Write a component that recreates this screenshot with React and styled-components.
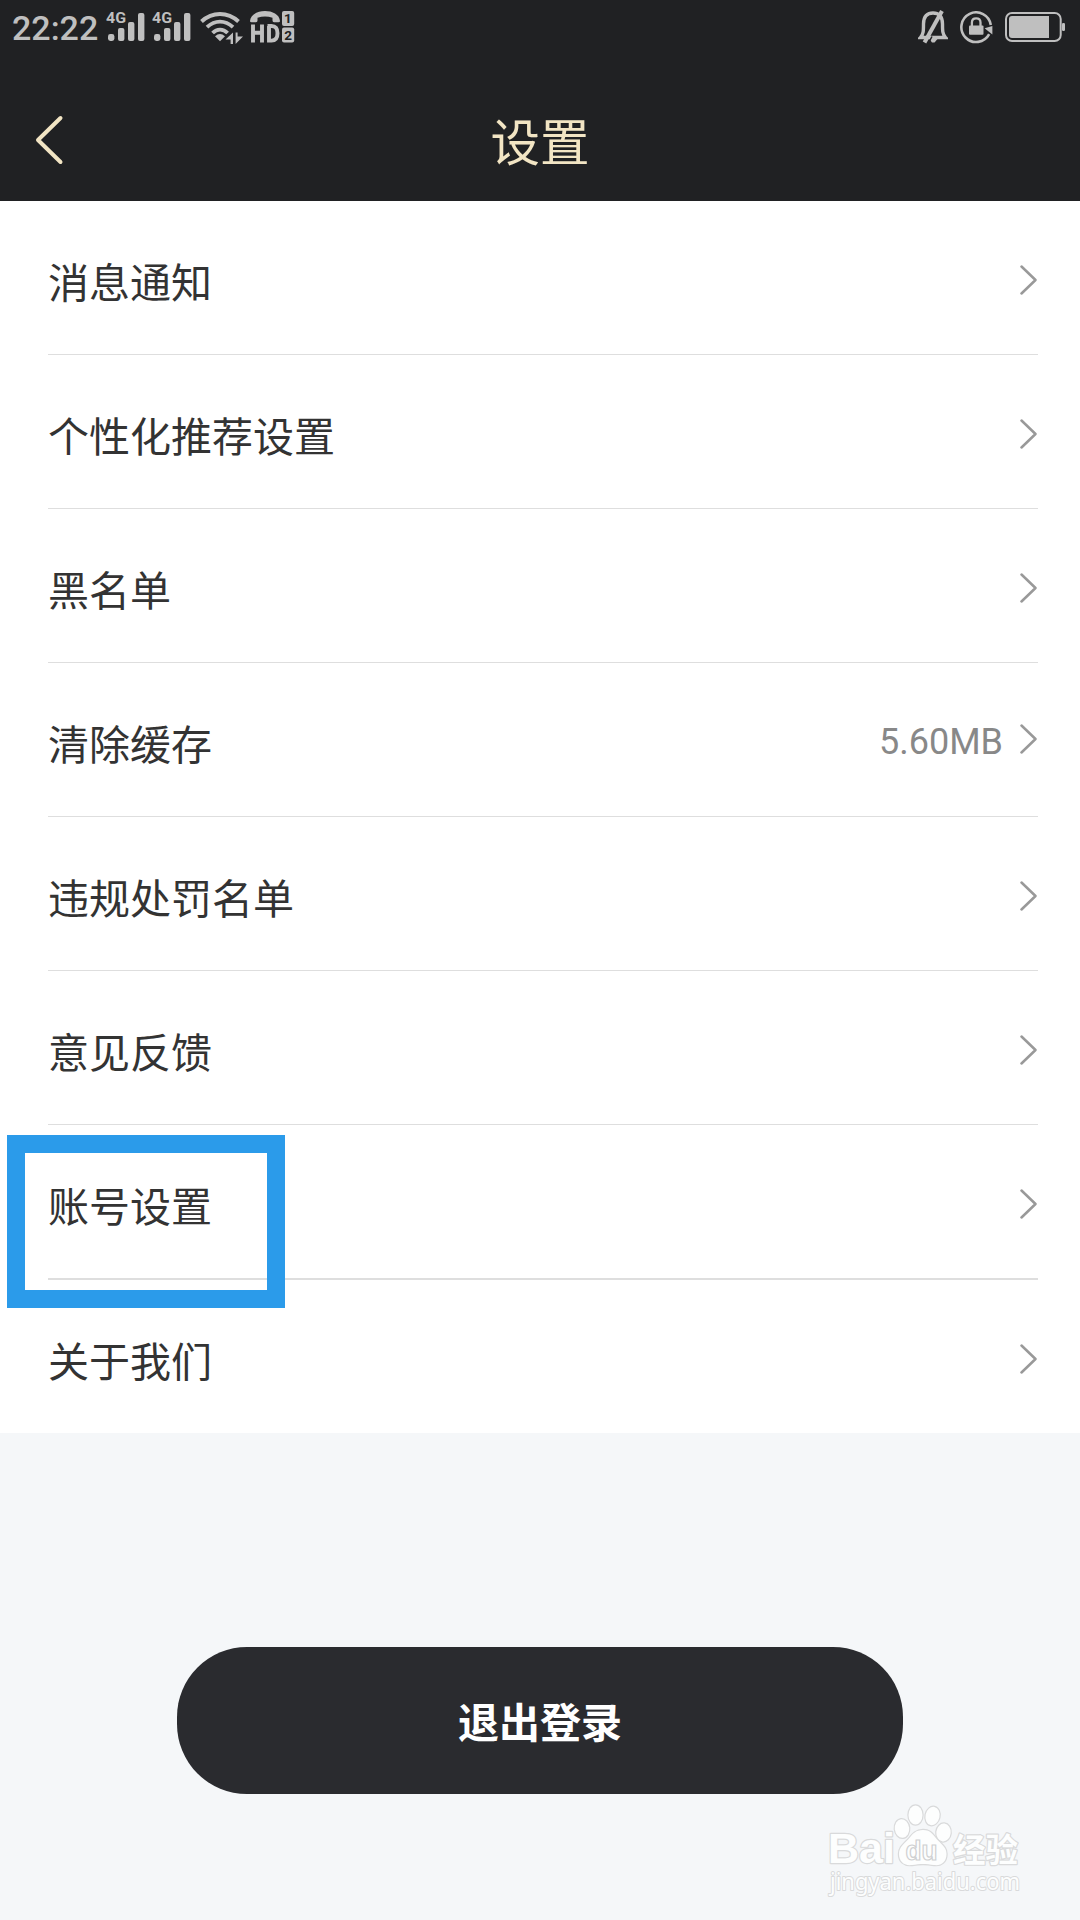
import React from 'react';
import styled, { createGlobalStyle } from 'styled-components';

const rows = [
    { label: '消息通知' },
    { label: '个性化推荐设置' },
    { label: '黑名单' },
    { label: '清除缓存', value: '5.60MB' },
    { label: '违规处罚名单' },
    { label: '意见反馈' },
    { label: '账号设置', marked: true },
    { label: '关于我们' },
];

const SignalIcon = () => (
    <svg width="40" height="32" viewBox="0 0 40 32" fill="#bfbfbf">
        <text x="0" y="13.4" fontSize="14" fontWeight="700" fontFamily="Roboto, sans-serif" textLength="20" lengthAdjust="spacingAndGlyphs">4G</text>
        <rect x="2" y="24" width="6.4" height="7" rx="2.4" />
        <rect x="12" y="18" width="6.4" height="13" rx="2" />
        <rect x="22" y="12" width="6.4" height="19" rx="2" />
        <rect x="32" y="3" width="6.4" height="28" rx="2" />
    </svg>
);

const WifiIcon = () => (
    <svg width="44" height="34" viewBox="0 0 44 34" fill="none" stroke="#bfbfbf">
        <path d="M1.500 11.500C12.500 1.500 27.500 1.500 38.500 11.500" strokeWidth="4" />
        <path d="M7 17.200C15 9.800 25 9.800 33 17.200" strokeWidth="3.800" />
        <path d="M12.600 23C17 18.400 23 18.400 27.600 23" strokeWidth="3.800" />
        <path d="M15 26.200Q20 21.800 25 26.200L20 31.200Z" fill="#bfbfbf" stroke="none" />
        <path d="M33 22.500V34H30.600V29.500H25.500ZM35.600 34V22.500H37.600V26.500H43Z" fill="#bfbfbf" stroke="none" />
    </svg>
);

const HdIcon = () => (
    <svg width="45" height="33" viewBox="0 0 45 33" fill="#bfbfbf">
        <path d="M0 10C1 -3.300 29 -3.300 30 10Q30 11.300 28.500 11.300H24Q22.500 11.300 22.500 9.500V6.800Q15 4 7.500 6.800V9.500Q7.500 11.300 6 11.300H1.500Q0 11.300 0 10Z" />
        <path d="M3 13.500V31.500M12 13.500V31.500M3 21.800H12M19 15V29.600H21.500Q27.500 29.600 27.500 22.300T21.500 15H17.500" fill="none" stroke="#bfbfbf" strokeWidth="3.900" />
        <rect x="32" y="0" width="12.200" height="15" rx="2" />
        <rect x="32" y="16.500" width="12.200" height="15" rx="2" />
        <g fill="#202123" fontSize="13.500" fontWeight="700" fontFamily="Roboto, sans-serif" textAnchor="middle">
            <text x="37.800" y="12.300">1</text>
            <text x="38" y="28.800">2</text>
        </g>
    </svg>
);

const BellOffIcon = () => (
    <svg width="30" height="34" viewBox="0 0 30 34" fill="none" stroke="#bfbfbf" strokeWidth="3.400">
        <path d="M2.500 27.500H27.500C24.500 24 24.500 21 24.500 14C24.500 6 20.500 3 15 3S5.500 6 5.500 14C5.500 21 5.500 24 2.500 27.500Z" />
        <path d="M11.500 29H19.500L16.500 32.500H14Z" fill="#bfbfbf" stroke="none" />
        <path d="M6.500 32.500L24 1" strokeWidth="4" />
        <path d="M10.500 33L14 26.500" stroke="#202123" strokeWidth="1.500" />
    </svg>
);

const LockIcon = () => (
    <svg width="33" height="33" viewBox="0 0 33 33" fill="none" stroke="#bfbfbf">
        <path d="M29.200 23.200A14.800 14.800 0 1 1 30.800 14" strokeWidth="2.600" />
        <path d="M24.600 17.200L32.400 15V23.500Z" fill="#bfbfbf" stroke="none" />
        <rect x="9" y="14.500" width="14.500" height="9.300" rx="1" fill="#bfbfbf" stroke="none" />
        <path d="M11.900 15V11.500Q11.900 7.400 16.200 7.400T20.500 11.500V15" strokeWidth="2.300" />
    </svg>
);

const BatteryIcon = () => (
    <svg width="61" height="30" viewBox="0 0 61 30">
        <rect x="1" y="1" width="54.700" height="28" rx="6" fill="none" stroke="#bfbfbf" strokeWidth="2" />
        <path d="M7 4H44V26H7Q4 26 4 23V7Q4 4 7 4Z" fill="#bfbfbf" />
        <rect x="57" y="11" width="3" height="8" rx="1.200" fill="#bfbfbf" />
    </svg>
);

const BackIcon = () => (
    <svg width="30" height="50" viewBox="0 0 30 50" fill="none" stroke="#f2e5c4" strokeWidth="4" strokeLinecap="round" strokeLinejoin="round">
        <path d="M25.500 3L3 25L25.500 47" />
    </svg>
);

const Arrow = () => (
    <svg width="18" height="30" viewBox="0 0 18 30" fill="none" stroke="#999" strokeWidth="2.500" strokeLinecap="round" strokeLinejoin="round">
        <path d="M2.500 1.500L16.500 15L2.500 28.500" />
    </svg>
);

const Watermark = () => (
    <WatermarkSvg width="210" height="110" viewBox="0 0 210 110">
        <g fill="#fdfefe" stroke="#d9dadb" strokeWidth="2.400" paintOrder="stroke" strokeLinejoin="round">
            <text x="2" y="62.500" fontSize="42" fontWeight="700" fontFamily="'Liberation Sans', Arial, sans-serif" textLength="67" lengthAdjust="spacingAndGlyphs">Bai</text>
            <ellipse cx="76" cy="28.500" rx="7.200" ry="9.300" transform="rotate(-6 76 28.500)" />
            <ellipse cx="89.500" cy="15" rx="7" ry="9.500" />
            <ellipse cx="106.500" cy="16" rx="7" ry="9.300" transform="rotate(12 106.500 16)" />
            <ellipse cx="117.500" cy="32.500" rx="7.200" ry="9" transform="rotate(6 117.500 32.500)" />
            <path d="M97 30C105 30 107 35 112 40.500C117 45.500 120.500 48 120.500 54C120.500 62 115 66 108 65C100 63.500 94 63.500 86 65C78 66 73 61.500 73 54C73 47 78 44 83 38.500C87 33.500 90 30 97 30Z" />
            <text x="127" y="61.500" fontSize="33" fontWeight="700" fontFamily="'Noto Sans CJK SC', sans-serif" textLength="65" lengthAdjust="spacingAndGlyphs">经验</text>
            <text x="4" y="90" fontSize="23" strokeWidth="2" fontFamily="'Noto Sans', sans-serif" textLength="190" lengthAdjust="spacingAndGlyphs">jingyan.baidu.com</text>
        </g>
        <text x="79.500" y="60" fontSize="27" fontWeight="700" fill="#fdfefe" stroke="#cfd0d1" strokeWidth="1.200" fontFamily="'Liberation Sans', Arial, sans-serif" textLength="32" lengthAdjust="spacingAndGlyphs">du</text>
    </WatermarkSvg>
);

const App = () => {
    return (
        <Page>
            <GlobalStyle />
            <Header>
                <StatusBar>
                    <StatusLeft>
                        <Clock>22:22</Clock>
                        <SignalIcon />
                        <SignalIcon />
                        <WifiIcon />
                        <HdIcon />
                    </StatusLeft>
                    <StatusRight>
                        <BellOffIcon />
                        <LockIcon />
                        <BatteryIcon />
                    </StatusRight>
                </StatusBar>
                <NavBar>
                    <BackButton aria-label="返回"><BackIcon /></BackButton>
                    <Title>设置</Title>
                </NavBar>
            </Header>

            <List>
                {rows.map(({ label, value, marked }) => (
                    <Row key={label} $thick={marked}>
                        <Label>{label}</Label>
                        <RowEnd $raised={Boolean(value)}>
                            {value && <Value>{value}</Value>}
                            <Arrow />
                        </RowEnd>
                        {marked && <Highlight />}
                    </Row>
                ))}
            </List>

            <Footer>
                <LogoutButton>退出登录</LogoutButton>
            </Footer>
            <Watermark />
        </Page>
    );
};
export default App;

const GlobalStyle = createGlobalStyle`
    body{
        margin: 0;
        background: #f5f7f9;
    }
    *{
        box-sizing: border-box;
    }
    svg{
        display: block;
        flex-shrink: 0;
    }
`
const Page = styled.div`
    display: flex;
    flex-direction: column;
    position: relative;
    width: 1080px;
    height: 1920px;
    overflow: hidden;
    background: #f5f7f9;
    font-family: Roboto, 'Noto Sans CJK SC', sans-serif;
`
const Header = styled.header`
    height: 201px;
    background: #202123;
`
const StatusBar = styled.div`
    display: flex;
    justify-content: space-between;
    height: 54px;
    padding: 0 14px 0 12px;
    color: #bfbfbf;
`
const StatusLeft = styled.div`
    display: flex;
    align-items: flex-start;
    padding-top: 10px;
    svg + svg{
        margin-left: 6px;
    }
    svg:nth-of-type(3){
        margin-left: 8px;
    }
    svg:last-child{
        margin-top: 1px;
    }
`
const Clock = styled.span`
    width: 94px;
    font-size: 34px;
    font-weight: 500;
    line-height: 36px;
`
const StatusRight = styled.div`
    display: flex;
    align-items: center;
    gap: 12px;
`
const NavBar = styled.div`
    display: grid;
    grid-template-columns: 100px 1fr 100px;
    align-items: center;
    height: 147px;
`
const BackButton = styled.button`
    padding: 0 0 0 35px;
    margin-top: 25px;
    border: 0;
    background: none;
`
const Title = styled.h1`
    margin: 32px 0 0;
    color: #f2e5c4;
    font-size: 49.500px;
    font-weight: 400;
    line-height: 60px;
    text-align: center;
`
const List = styled.main`
    display: flex;
    flex-direction: column;
    height: 1232px;
    padding: 0 42px 0 48px;
    background: #fff;
`
const Row = styled.div`
    display: flex;
    align-items: center;
    justify-content: space-between;
    position: relative;
    height: ${({ $thick }) => ($thick ? 155 : 154)}px;
    border-bottom: ${({ $thick }) => ($thick ? 2 : 1)}px solid #dedede;
    &:last-child{
        height: 153px;
        border-bottom: 0;
    }
`
const Label = styled.span`
    padding-top: 12px;
    color: #333;
    font-size: 41px;
    line-height: 60px;
`
const RowEnd = styled.div`
    display: flex;
    align-items: center;
    gap: 16px;
    padding-right: 1px;
    margin-top: ${({ $raised }) => ($raised ? -2 : 4)}px;
`
const Value = styled.span`
    padding-top: 7px;
    color: #888;
    font-size: 36px;
    line-height: 42px;
`
// marker frame drawn over the row and its divider
const Highlight = styled.div`
    position: absolute;
    top: 10px;
    left: -41px;
    width: 278px;
    height: 173px;
    border: 18px solid #2b9bea;
    z-index: 1;
`
const Footer = styled.footer`
    display: flex;
    justify-content: center;
    padding-top: 214px;
`
const LogoutButton = styled.button`
    width: 726px;
    height: 147px;
    padding: 0 0 2px;
    border: 0;
    border-radius: 70px;
    background: #2a2b2f;
    color: #fff;
    font-family: inherit;
    font-size: 41px;
    font-weight: 700;
`
const WatermarkSvg = styled.svg`
    position: absolute;
    left: 826px;
    top: 1800px;
`
